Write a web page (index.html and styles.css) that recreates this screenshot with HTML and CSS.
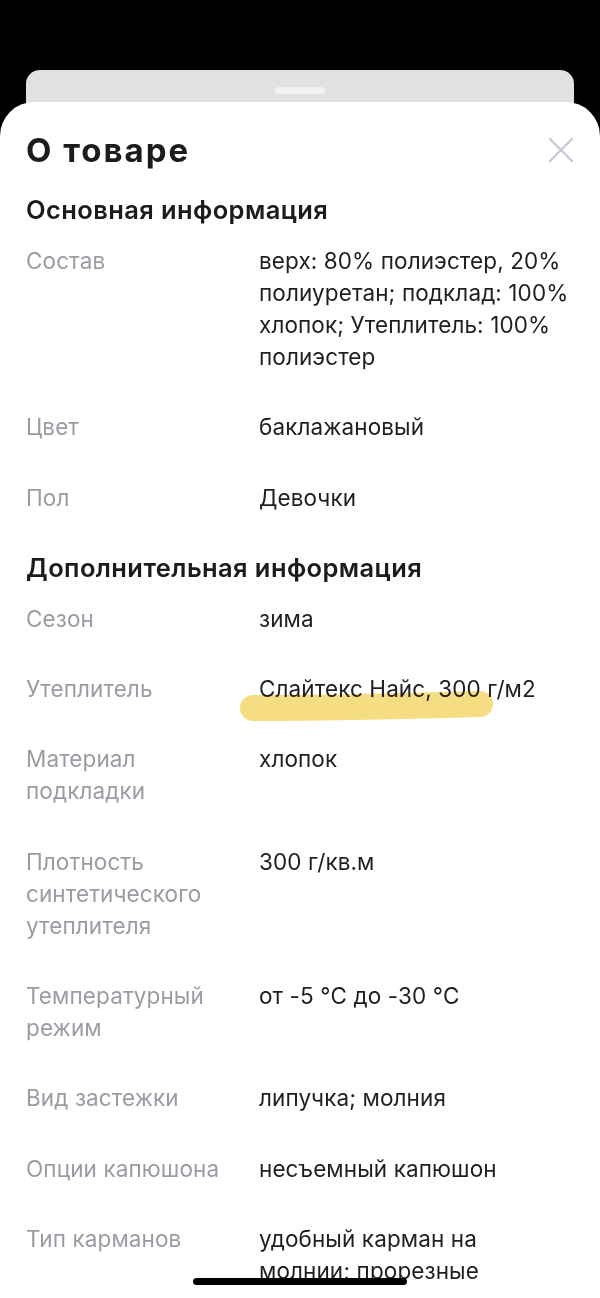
FILE: index.html
```html
<!DOCTYPE html>
<html lang="ru">
<head>
    <meta charset="UTF-8">
    <meta name="viewport" content="width=device-width, initial-scale=1.0">
    <title>О товаре</title>
    <link rel="stylesheet" href="styles.css">
</head>
<body>
    <div class="screen">
        <div class="back-card">
            <div class="handle"></div>
        </div>

        <div class="sheet">
            <div class="sheet-header">
                <h1 class="title">О товаре</h1>
                <button class="close" aria-label="Закрыть">
                    <svg width="26" height="26" viewBox="0 0 26 26">
                        <path d="M2 2 L24 24 M24 2 L2 24" stroke="#c8c7d6" stroke-width="2.3" stroke-linecap="round" fill="none"/>
                    </svg>
                </button>
            </div>

            <h2 class="section">Основная информация</h2>
            <div class="row">
                <div class="label">Состав</div>
                <div class="value">верх: 80% полиэстер, 20% полиуретан; подклад: 100% хлопок; Утеплитель: 100% полиэстер</div>
            </div>
            <div class="row">
                <div class="label">Цвет</div>
                <div class="value">баклажановый</div>
            </div>
            <div class="row">
                <div class="label">Пол</div>
                <div class="value">Девочки</div>
            </div>

            <h2 class="section">Дополнительная информация</h2>
            <div class="row">
                <div class="label">Сезон</div>
                <div class="value">зима</div>
            </div>
            <div class="row">
                <div class="label">Утеплитель</div>
                <div class="value marked">
                    Слайтекс Найс, 300 г/м2
                    <svg class="marker" width="270" height="50" viewBox="0 0 270 50">
                        <path d="M15 32 C 90 32, 170 30, 242 28" stroke="#f6dd82" stroke-width="26" stroke-linecap="round" fill="none"/>
                    </svg>
                </div>
            </div>
            <div class="row">
                <div class="label">Материал подкладки</div>
                <div class="value">хлопок</div>
            </div>
            <div class="row">
                <div class="label">Плотность синтетического утеплителя</div>
                <div class="value">300 г/кв.м</div>
            </div>
            <div class="row">
                <div class="label">Температурный режим</div>
                <div class="value">от -5 °C до -30 °C</div>
            </div>
            <div class="row">
                <div class="label">Вид застежки</div>
                <div class="value">липучка; молния</div>
            </div>
            <div class="row">
                <div class="label">Опции капюшона</div>
                <div class="value">несъемный капюшон</div>
            </div>
            <div class="row">
                <div class="label">Тип карманов</div>
                <div class="value">удобный карман на молнии; прорезные</div>
            </div>
        </div>

        <div class="home-bar"></div>
    </div>
</body>
</html>
```

FILE: styles.css
```css
* {
    box-sizing: border-box;
}

body {
    margin: 0;
    background-color: #000;
    font-family: Inter, "Noto Sans", Roboto, sans-serif;
}

.screen {
    position: relative;
    width: 600px;
    height: 1298px;
    overflow: hidden;
    background-color: #000;
    padding-top: 70px;
}

.back-card {
    margin: 0 26px;
    height: 60px;
    background-color: #e1e1e1;
    border-radius: 14px 14px 0 0;
    display: flex;
    justify-content: center;
    padding-top: 17px;
}

.handle {
    width: 50px;
    height: 7px;
    border-radius: 4px;
    background-color: #f1f1f1;
}

.sheet {
    margin-top: -28px;
    background-color: #fff;
    border-radius: 34px 34px 0 0;
    padding: 24px 26px 0 26px;
    min-height: 1300px;
}

.sheet-header {
    display: flex;
    justify-content: space-between;
    align-items: center;
    height: 48px;
}

.title {
    margin: 0;
    font-size: 33px;
    font-weight: 700;
    color: #1c1c1f;
    letter-spacing: 2px;
}

.close {
    border: none;
    background: none;
    padding: 0;
    width: 26px;
    height: 26px;
    display: flex;
}

.section {
    margin: 20px 0 19px 0;
    font-size: 25.5px;
    font-weight: 600;
    line-height: 32px;
    letter-spacing: 0.4px;
    color: #1c1c1f;
}

.row + .section {
    margin-top: 0;
}

.row {
    display: grid;
    grid-template-columns: 233px 1fr;
    font-size: 22.5px;
    line-height: 32px;
    letter-spacing: 0.1px;
    padding-bottom: 38.3px;
}

.label {
    color: #9b9ba4;
    padding-right: 12px;
}

.value {
    color: #1f1f22;
}

.marked {
    position: relative;
}

.marker {
    position: absolute;
    left: -21px;
    top: 3px;
    mix-blend-mode: multiply;
}

.home-bar {
    position: absolute;
    left: 193px;
    top: 1278px;
    width: 214px;
    height: 7px;
    border-radius: 4px;
    background-color: #000;
}
```
